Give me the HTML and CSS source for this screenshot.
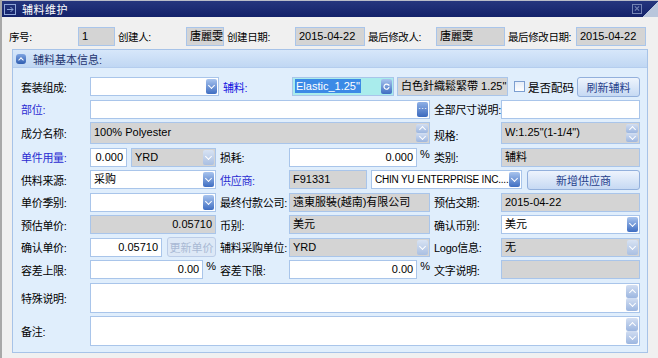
FILE: index.html
```html
<!DOCTYPE html>
<html lang="zh">
<head>
    <meta charset="UTF-8">
    <title>辅料维护</title>
    <link rel="stylesheet" href="styles.css">
</head>
<body>
<div class="win">
    <div class="title">
        <svg class="t-ico" width="12" height="11" viewBox="0 0 12 11">
            <rect x="0.5" y="0.5" width="11" height="10" fill="none" stroke="#8fa6d8"/>
            <path d="M3 5.5h6M6.5 3l2.5 2.5L6.5 8" fill="none" stroke="#8fa6d8"/>
        </svg>
        <span class="t-txt">辅料维护</span>
        <span class="t-close"></span>
        <span class="t-corner"></span>
    </div>

    <div class="head">
        <span class="hl first">序号:</span><span class="fd g w37">1</span>
        <span class="hl">创建人:</span><span class="fd g w38">唐麗雯</span>
        <span class="hl">创建日期:</span><span class="fd g w70">2015-04-22</span>
        <span class="hl">最后修改人:</span><span class="fd g w69">唐麗雯</span>
        <span class="hl">最后修改日期:</span><span class="fd g w70">2015-04-22</span>
    </div>

    <div class="panel">
        <div class="panel-hd"><span class="p-ico"></span>辅料基本信息:</div>
        <div class="form">
            <!-- row 1 -->
            <span class="lb">套装组成:</span>
            <div class="span-all line">
                <div class="fd cb w129"><span class="tx"></span><span class="dd"></span></div>
                <span class="lb blue strong w73">辅料:</span>
                <div class="fd cb cyan w102"><span class="tx"><span class="sel">Elastic_1.25"</span></span><span class="rf"><svg width="7" height="7" viewBox="0 0 7 7"><path d="M5.5 2.2A2.5 2.5 0 1 0 6 4" fill="none" stroke="#fff" stroke-width="1.2"/><path d="M4 1.2h2.4v2.2z" fill="#fff"/></svg></span></div>
                <span class="fd g w111 ml3">白色針織鬆緊帶 1.25"</span>
                <span class="chk"></span><span class="chk-lb">是否配码</span>
                <span class="btn w63 push">刷新辅料</span>
            </div>

            <!-- row 2 -->
            <span class="lb blue">部位:</span>
            <div class="fd cb c2-4"><span class="tx"></span><span class="dots">···</span></div>
            <span class="lb pl">全部尺寸说明:</span>
            <span class="fd"></span>

            <!-- row 3 -->
            <span class="lb">成分名称:</span>
            <div class="fd g ta c2-4"><span class="tx">100% Polyester</span><span class="sb"><i class="up"></i><i class="down"></i></span></div>
            <span class="lb pl low">规格:</span>
            <div class="fd g ta"><span class="tx">W:1.25"(1-1/4")</span><span class="sb"><i class="up"></i><i class="down"></i></span></div>

            <!-- row 4 -->
            <span class="lb blue">单件用量:</span>
            <div class="line">
                <span class="fd r w37">0.000</span>
                <div class="fd g cb w85 ml4"><span class="tx">YRD</span><span class="dd off"></span></div>
            </div>
            <span class="lb pl">损耗:</span>
            <div class="line"><span class="fd r w128">0.000</span><span class="pct">%</span></div>
            <span class="lb pl">类别:</span>
            <span class="fd g">辅料</span>

            <!-- row 5 -->
            <span class="lb">供料来源:</span>
            <div class="fd cb"><span class="tx">采购</span><span class="dd"></span></div>
            <span class="lb pl blue">供应商:</span>
            <div class="c4-6 line">
                <span class="fd g w78">F91331</span>
                <div class="fd cb w151 ml4"><span class="tx narrow">CHIN YU ENTERPRISE INC....</span><span class="dd"></span></div>
                <span class="btn w113 push">新增供应商</span>
            </div>

            <!-- row 6 -->
            <span class="lb">单价季别:</span>
            <div class="fd cb"><span class="tx"></span><span class="dd"></span></div>
            <span class="lb pl">最终付款公司:</span>
            <span class="fd g">遠東服裝(越南)有限公司</span>
            <span class="lb pl">预估交期:</span>
            <span class="fd g">2015-04-22</span>

            <!-- row 7 -->
            <span class="lb">预估单价:</span>
            <span class="fd g r">0.05710</span>
            <span class="lb pl">币别:</span>
            <span class="fd g">美元</span>
            <span class="lb pl">确认币别:</span>
            <div class="fd cb"><span class="tx">美元</span><span class="dd"></span></div>

            <!-- row 8 -->
            <span class="lb">确认单价:</span>
            <div class="line">
                <span class="fd r w72">0.05710</span>
                <span class="btn off w49 push">更新单价</span>
            </div>
            <span class="lb pl">辅料采购单位:</span>
            <div class="fd g cb"><span class="tx">YRD</span><span class="dd off"></span></div>
            <span class="lb pl">Logo信息:</span>
            <div class="fd g cb"><span class="tx">无</span><span class="dd off"></span></div>

            <!-- row 9 -->
            <span class="lb">容差上限:</span>
            <div class="line"><span class="fd r w115">0.00</span><span class="pct">%</span></div>
            <span class="lb pl">容差下限:</span>
            <div class="line"><span class="fd r w130">0.00</span><span class="pct">%</span></div>
            <span class="lb pl">文字说明:</span>
            <span class="fd g"></span>

            <!-- row 10, 11 -->
            <span class="lb">特殊说明:</span>
            <div class="fd ta span-all"><span class="tx"></span><span class="sb big"><i class="up"></i><i class="down"></i></span></div>
            <span class="lb">备注:</span>
            <div class="fd ta span-all"><span class="tx"></span><span class="sb big"><i class="up"></i><i class="down"></i></span></div>
        </div>
    </div>
</div>
</body>
</html>
```

FILE: styles.css
```css
* {padding: 0; margin: 0; box-sizing: border-box;}
body {background: #f0f0f0; font-family: "Liberation Sans", "Noto Sans CJK SC", sans-serif; font-size: 11px; color: #000;}
.win {width: 658px; height: 358px; border-left: 2px solid #a8a8a8; overflow: hidden;}

/* title bar */
.title {display: flex; align-items: center; height: 17px; margin-left: -2px; padding-left: 4px;
    border-top: 1px solid #b8bcc8; background: linear-gradient(#25367e, #13226a); color: #fff;}
.t-ico {display: block;}
.t-txt {margin-left: 6px; font-size: 11px; letter-spacing: 0.5px;}
.t-close {margin-left: auto; width: 10px; height: 10px; border: 1px solid #7484b4; position: relative;}
.t-close::before, .t-close::after {content: ''; position: absolute; left: 1px; top: 3px; width: 6px; height: 1px; background: #7484b4; transform: rotate(45deg);}
.t-close::after {transform: rotate(-45deg);}
.t-corner {width: 15px; height: 16px; margin-left: 1px; background: linear-gradient(to bottom right, transparent 50%, #b9c6dc 50%);}

/* header row */
.head {display: flex; align-items: center; margin-top: 10px; padding-left: 7px;}
.hl {width: 68px; margin-left: 3px; white-space: nowrap; font-size: 10.5px; letter-spacing: -0.4px;}
.hl.first {width: 69px; margin-left: 0;}

/* fields */
.fd {height: 19px; border: 1px solid #a9c5ea; background: #fff; padding: 0 3px; line-height: 17px; white-space: nowrap; overflow: hidden; display: block;}
.fd.g {background: #d4d4d4;}
.fd.r {text-align: right;}
.fd.cyan {background: #a9ecec; padding-left: 2px;}
.sel {background: #3b8ae6; color: #fff; padding: 1px 1px;}
.cb {display: flex; align-items: center; padding-right: 1px;}
.cb .tx, .ta .tx {flex: 1; overflow: hidden; white-space: nowrap;}
.tx.narrow {font-size: 10px; letter-spacing: -0.2px;}
.dd, .rf {width: 11px; height: 15px; border-radius: 2px; background: linear-gradient(#a8c4ee, #3f6ec2);
    display: flex; align-items: center; justify-content: center; flex: none;}
.dd::after {content: ''; width: 4px; height: 4px; border-right: 1.5px solid #fff; border-bottom: 1.5px solid #fff; transform: translateY(-1px) rotate(45deg);}
.dd.off {background: linear-gradient(#d8e3f3, #a9bfe2);}
.dots {width: 11px; height: 15px; border-radius: 2px; background: linear-gradient(#8fb0e6, #3b69bd); color: #fff;
    font-size: 9px; line-height: 13px; text-align: center; flex: none;}

/* multi-line with scroll arrows */
.ta {display: flex; align-items: stretch; padding: 1px 1px 1px 3px; height: auto; line-height: 16px;}
.sb {display: flex; flex-direction: column; justify-content: space-between; flex: none;}
.sb i {display: flex; align-items: center; justify-content: center; width: 12px; height: 9px; border-radius: 2px; background: linear-gradient(#d2def2, #9cb6e0);}
.sb.big i {height: 13px;}
.sb i::after {content: ''; width: 4px; height: 4px; border-right: 1.5px solid #fff; border-bottom: 1.5px solid #fff;}
.sb i.up::after {transform: translateY(1px) rotate(-135deg);}
.sb i.down::after {transform: translateY(-1px) rotate(45deg);}

/* buttons */
.btn {height: 20px; border: 1px solid #93b0dc; border-radius: 3px; background: linear-gradient(#eef4fd, #c6d9f3);
    color: #27418c; display: flex; align-items: center; justify-content: center; white-space: nowrap;}
.btn.off {border-color: #bccde8; background: #dde8f6; color: #a9b9d4;}

.chk {width: 11px; height: 11px; border: 1px solid #7d9fd0; background: linear-gradient(#e6edf8, #fff); margin-left: 6px;}
.chk-lb {margin-left: 3px; font-size: 11.5px;}
.pct {margin-left: 3px; align-self: flex-start; line-height: 12px;}

/* section panel */
.panel {margin: 3px 10px 0 10px; border: 1px solid #a7c3e8; background: #e0eefc;}
.panel-hd {display: flex; align-items: center; height: 18px; padding-left: 3px; background: linear-gradient(#d7e7fa, #c0d7f3);
    color: #1e3470; border-bottom: 1px solid #b4cdee;}
.p-ico {width: 10px; height: 10px; margin-right: 7px; border-radius: 3px; background: linear-gradient(#7ea4e2, #2f5db0);
    display: flex; align-items: center; justify-content: center;}
.p-ico::after {content: ''; width: 3px; height: 3px; border-left: 1.5px solid #fff; border-top: 1.5px solid #fff; transform: translateY(1px) rotate(45deg);}

.form {display: grid; grid-template-columns: 69px 126px 73px 141px 71px 139px;
    grid-template-rows: 19px 19px 22px repeat(6, 19px) 30px 30px; row-gap: 3.5px;
    padding: 9px 9px 6px 8px;}
.lb {display: flex; align-items: center; white-space: nowrap; letter-spacing: -0.3px;}
.lb.pl {padding-left: 4px;}
.lb.low {padding-top: 3px;}
.lb.blue {color: #2c2cd2;}
.lb.strong {color: #1414e0; padding-left: 4px;}
.line {display: flex; align-items: center;}
.span-all {grid-column: 2 / 7;}
.c2-4 {grid-column: 2 / 5;}
.c4-6 {grid-column: 4 / 7;}
.push {margin-left: auto;}
.ml3 {margin-left: 3px;}
.ml4 {margin-left: 4px;}

.w37 {width: 37px;} .w38 {width: 38px;} .w49 {width: 49px;} .w63 {width: 63px;} .w69 {width: 69px;} .w70 {width: 70px;}
.w72 {width: 72px;} .w73 {width: 73px;} .w78 {width: 78px;} .w85 {width: 85px;} .w102 {width: 102px;} .w111 {width: 111px;}
.w113 {width: 113px;} .w115 {width: 115px;} .w128 {width: 128px;} .w129 {width: 129px;} .w130 {width: 130px;} .w151 {width: 151px;}
.rf {margin-left: auto;}
```
